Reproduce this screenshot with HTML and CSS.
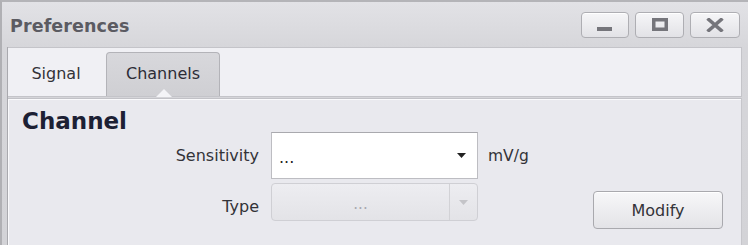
FILE: index.html
```html
<!DOCTYPE html>
<html>
<head>
<meta charset="utf-8">
<link rel="stylesheet" href="styles.css">
</head>
<body>
<div class="window">
  <div class="titlebar">
    <div class="title">Preferences</div>
    <div class="winbtns">
      <div class="winbtn"><svg width="16" height="14" viewBox="0 0 16 14"><rect x="0" y="9" width="15" height="4" fill="#75757b"/></svg></div>
      <div class="winbtn"><svg width="16" height="14" viewBox="0 0 16 14"><rect x="1.75" y="1.75" width="12.5" height="9.5" fill="none" stroke="#75757b" stroke-width="3.5"/></svg></div>
      <div class="winbtn"><svg width="18" height="14" viewBox="0 0 18 14"><path d="M1.5 0.5 L16.5 13.5 M16.5 0.5 L1.5 13.5" stroke="#75757b" stroke-width="3.6"/></svg></div>
    </div>
  </div>
  <div class="frame">
    <div class="tabstrip">
      <div class="tab">Signal</div>
      <div class="tab active">Channels<span class="notch"></span></div>
    </div>
    <div class="panel">
      <div class="heading">Channel</div>
      <div class="form">
        <div class="label">Sensitivity</div>
        <div class="combo">
          <span class="value">...</span>
          <svg class="arrow" width="9" height="5" viewBox="0 0 9 5"><path d="M0 0 H9 L4.5 5 Z" fill="#222"/></svg>
        </div>
        <div class="unit">mV/g</div>
        <div></div>
        <div class="label">Type</div>
        <div class="combo disabled">
          <span class="value">...</span>
          <span class="dd"><svg width="9" height="5" viewBox="0 0 9 5"><path d="M0 0 H9 L4.5 5 Z" fill="#c4c4c8"/></svg></span>
        </div>
        <div></div>
        <button class="btn">Modify</button>
      </div>
    </div>
  </div>
</div>
</body>
</html>
```
FILE: styles.css
```css
html, body {
  margin: 0;
  padding: 0;
}
body {
  width: 748px;
  height: 245px;
  overflow: hidden;
  background: #d9d9dd;
  font-family: "DejaVu Sans", sans-serif;
}
.window {
  box-sizing: border-box;
  width: 748px;
  height: 245px;
  border-top: 2px solid #b4b4b8;
  border-left: 2px solid #b0b0b4;
  background: linear-gradient(#e2e2e6, #d6d6da 46px, #d3d3d7);
  display: flex;
  flex-direction: column;
}
.titlebar {
  height: 45px;
  display: flex;
  align-items: center;
  justify-content: space-between;
  padding: 0 8px 2px 8px;
  box-sizing: border-box;
}
.title {
  font-weight: bold;
  font-size: 17.5px;
  color: #5b5b62;
  letter-spacing: 0.1px;
  padding-top: 4px;
}
.winbtns {
  display: flex;
  gap: 6px;
  padding-top: 2px;
}
.winbtn {
  width: 46px;
  height: 24px;
  border: 1px solid #aeaeb3;
  border-radius: 4px;
  background: linear-gradient(#f6f6f8, #e2e2e6);
  box-shadow: inset 0 1px 0 #ffffff;
  display: flex;
  align-items: center;
  justify-content: center;
}
.winbtn:nth-child(2) { width: 47px; }
.winbtn:nth-child(3) { width: 48px; }
.frame {
  flex: 1;
  margin-left: 5px;
  margin-right: 6px;
  border-left: 1px solid #a9a9ae;
  display: flex;
  flex-direction: column;
}
.tabstrip {
  height: 50px;
  box-sizing: border-box;
  background: #f0f0f4;
  border: 1px solid #c4c4c9;
  border-left: none;
  display: flex;
  align-items: flex-end;
  padding-left: 2px;
  gap: 4px;
}
.tab {
  position: relative;
  width: 92px;
  height: 44px;
  box-sizing: border-box;
  display: flex;
  align-items: center;
  justify-content: center;
  font-size: 16px;
  color: #333338;
  padding-bottom: 2px;
}
.tab.active {
  width: 114px;
  background: linear-gradient(#d8d8dc, #cfcfd3);
  border: 1px solid #b3b3b8;
  border-bottom: none;
  border-radius: 4px 4px 0 0;
  color: #2c2c36;
}
.notch {
  position: absolute;
  left: 49px;
  bottom: -1px;
  width: 0;
  height: 0;
  border-left: 8px solid transparent;
  border-right: 8px solid transparent;
  border-bottom: 8px solid #f4f4f7;
}
.panel {
  flex: 1;
  background: #e9e9ee;
  border-top: 1px solid #c2c2c7;
  border-right: 1px solid #c6c6cb;
  margin-top: 1px;
  box-shadow: inset 1px 1px 0 #fafafc;
  padding: 12px 0 0 14px;
}
.heading {
  font-weight: bold;
  font-size: 23px;
  line-height: 21px;
  color: #1c2034;
}
.form {
  display: grid;
  grid-template-columns: 237px 207px 105px 130px;
  grid-template-rows: 47px 47px;
  column-gap: 12px;
  row-gap: 4px;
}
.label {
  font-size: 16px;
  color: #333338;
  text-align: right;
  align-self: center;
}
.combo {
  box-sizing: border-box;
  background: #ffffff;
  border: 1px solid #bdbdc2;
  border-top-color: #a9a9ae;
  display: flex;
  align-items: center;
  position: relative;
  font-size: 16px;
  color: #222;
  padding-left: 7px;
}
.combo .value {
  flex: 1;
  padding-top: 4px;
}
.combo .arrow {
  margin-right: 11px;
}
.combo.disabled {
  height: 38px;
  background: linear-gradient(#ededf1, #e3e3e7);
  border: 1px solid #cfcfd4;
  border-radius: 4px;
  padding-left: 0;
  color: #a8a8b0;
}
.combo.disabled .value {
  text-align: center;
  font-size: 15px;
}
.dd {
  width: 27px;
  align-self: stretch;
  border-left: 1px solid #d2d2d6;
  display: flex;
  align-items: center;
  justify-content: center;
}
.unit {
  font-size: 15.5px;
  color: #333338;
  align-self: center;
  margin-left: -2px;
}
.btn {
  align-self: start;
  margin-top: 8px;
  height: 38px;
  width: 130px;
  margin-left: -14px;
  border: 1px solid #a9a9ae;
  border-radius: 4px;
  background: linear-gradient(#f7f7f9, #e3e3e7);
  box-shadow: inset 0 1px 0 #ffffff;
  font-family: "DejaVu Sans", sans-serif;
  font-size: 16px;
  color: #333338;
  padding: 0;
}
```
